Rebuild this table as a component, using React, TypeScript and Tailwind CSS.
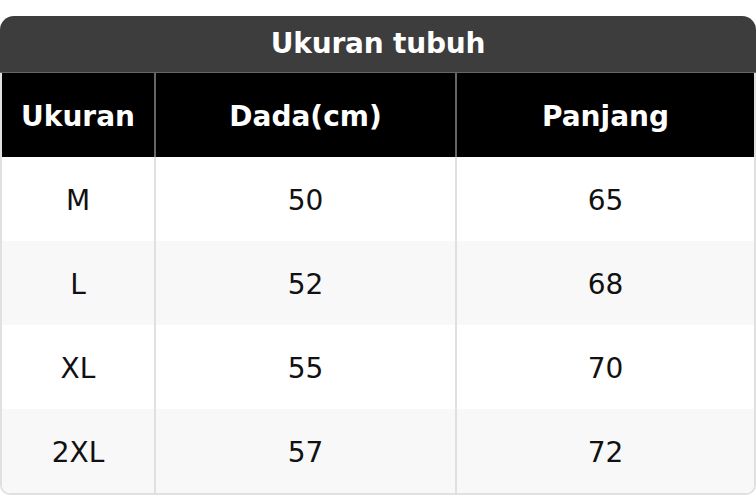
import React from 'react';

const rows = [
  { size: 'M', chest: '50', length: '65' },
  { size: 'L', chest: '52', length: '68' },
  { size: 'XL', chest: '55', length: '70' },
  { size: '2XL', chest: '57', length: '72' },
];

export default function App() {
  return (
    <div className="w-[756px] h-[496px] bg-white pt-4" style={{ fontFamily: '"DejaVu Sans", sans-serif' }}>
      <div className="h-[57px] bg-[#3d3d3d] rounded-t-[14px] border-b border-[#666666] flex items-center justify-center">
        <span className="text-white font-bold text-[28px] leading-none tracking-[-0.2px]">Ukuran tubuh</span>
      </div>
      <div className="border-x-2 border-b-2 border-[#e0e0e0] rounded-b-[10px] overflow-hidden">
        <div className="grid grid-cols-[154px_301px_1fr] h-[84px] bg-black text-white font-bold text-[28px]">
          <div className="flex items-center justify-center pt-1 border-r-2 border-[#666666]">Ukuran</div>
          <div className="flex items-center justify-center pt-1 border-r-2 border-[#666666]">Dada(cm)</div>
          <div className="flex items-center justify-center pt-1">Panjang</div>
        </div>
        {rows.map((r, i) => (
          <div
            key={r.size}
            className={`grid grid-cols-[154px_301px_1fr] h-[84px] text-[28px] text-[#111111] ${i % 2 === 1 ? 'bg-[#f8f8f8]' : 'bg-white'}`}
          >
            <div className="flex items-center justify-center pt-1 border-r-2 border-[#e0e0e0]">{r.size}</div>
            <div className="flex items-center justify-center pt-1 border-r-2 border-[#e0e0e0]">{r.chest}</div>
            <div className="flex items-center justify-center pt-1">{r.length}</div>
          </div>
        ))}
      </div>
    </div>
  );
}
